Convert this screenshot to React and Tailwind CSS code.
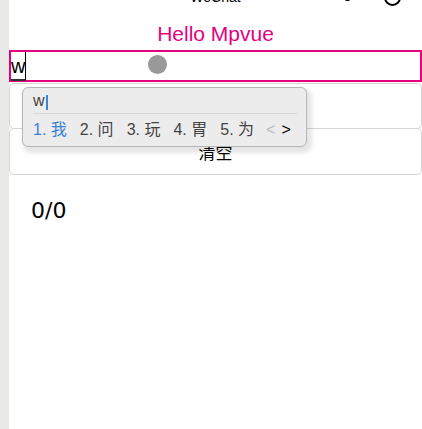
import React from 'react';

const candidates = ['我', '问', '玩', '胃', '为'];

const App = () => {
  return (
    <div className="flex min-h-screen bg-white font-['Liberation_Sans',sans-serif]">
      {/* simulator edge */}
      <div className="w-[9px] shrink-0 bg-[#e9e9e7]" />

      <div className="relative flex-1">
        {/* nav bar, mostly scrolled off */}
        <div className="relative h-[9px] overflow-hidden">
          <div className="-mt-[11px] text-center text-[14px] font-medium leading-[16px] text-black">
            WeChat
          </div>
          <div className="absolute right-[21px] -top-[11px] flex items-center gap-[26px]">
            <div className="flex items-center gap-[2px]">
              <span className="h-[5px] w-[5px] rounded-full bg-black" />
              <span className="h-[7px] w-[7px] rounded-full bg-black" />
              <span className="h-[5px] w-[5px] rounded-full bg-black" />
            </div>
            <div className="flex h-[17px] w-[17px] items-center justify-center rounded-full border-2 border-black">
              <span className="h-[5px] w-[5px] rounded-full bg-black" />
            </div>
          </div>
        </div>

        <h1 className="mt-[13px] text-center text-[21px] leading-[24px] text-[#e5007f]">Hello Mpvue</h1>

        {/* input */}
        <div className="relative mt-[4px] flex h-[32px] items-center border-2 border-[#e5007f]">
          <span className="text-[20px] leading-[28px] text-black underline decoration-[#333] decoration-2 underline-offset-[6px]">
            w
          </span>
          <span className="inline-block h-[28px] w-px bg-black" />
          <span className="absolute left-[137px] top-[3px] h-[19px] w-[19px] rounded-full bg-[#999]" />
        </div>

        {/* buttons */}
        <button className="mt-px block h-[46px] w-full rounded-[5px] border border-[#d4d4d4] bg-white text-[17px] text-black font-['Noto_Sans_CJK_SC',sans-serif]">
          添加
        </button>
        <button className="-mt-px block h-[47px] w-full rounded-[5px] border border-[#d4d4d4] bg-white text-[17px] leading-none text-black font-['Noto_Sans_CJK_SC',sans-serif]">
          清空
        </button>

        <div className="mt-[23px] pl-[22px] text-[22px] leading-[26px] text-black font-['DejaVu_Sans',sans-serif]">
          0/0
        </div>

        {/* IME candidate window */}
        <div className="absolute left-[13px] top-[87px] w-[285px] h-[60px] rounded-[6px] border border-[#b5b5b5] bg-[#ececec] px-[10px] shadow-[3px_4px_4px_2px_rgba(0,0,0,0.1)]">
          <div className="flex h-[25px] items-end pb-[3px] text-[16px] leading-[18px] text-[#444]">
            <span>w</span>
            <span className="ml-[1px] inline-block h-[15px] w-[2px] bg-[#3a84e0]" />
          </div>
          <div className="mr-[-1px] h-px bg-[#d6d6d6]" />
          <div className="flex h-[32px] items-center gap-[13px] text-[16px] leading-[18px] text-[#444] font-['Liberation_Sans','Noto_Sans_CJK_SC',sans-serif]">
            {candidates.map((c, i) => (
              <span key={i} className={i === 0 ? 'text-[#3a80d6]' : ''}>
                {i + 1}. {c}
              </span>
            ))}
            <span className="-ml-[1px] flex gap-[6px]">
              <span className="text-[#bbb]">&lt;</span>
              <span className="text-black">&gt;</span>
            </span>
          </div>
        </div>
      </div>
    </div>
  );
};

export default App;
